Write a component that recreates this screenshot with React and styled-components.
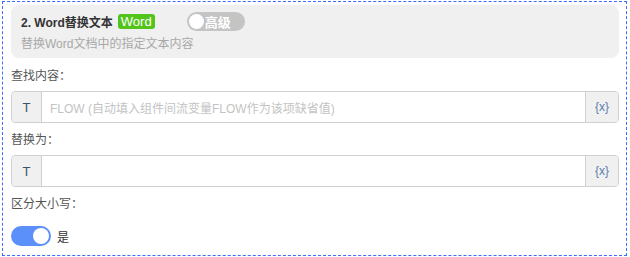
import React from 'react'
import styled, { createGlobalStyle } from 'styled-components'

const Global = createGlobalStyle`
  body {
    margin: 0;
    background: #fff;
    font-family: 'Liberation Sans', 'Noto Sans CJK SC', sans-serif;
    font-size: 12px;
    color: #555;
  }
`

const Panel = styled.div`
  margin: 1px 3px 0 2px;
  border: 1px dashed #3d6bff;
  padding: 3px 7px 10px 8px;
  height: 255px;
  box-sizing: border-box;
`

const Header = styled.div`
  background: #f0f0f0;
  border-radius: 8px;
  padding: 6px 10px 6px;
  margin-bottom: 5px;
`

const TitleRow = styled.div`
  display: flex;
  align-items: center;
  height: 20px;
`

const Title = styled.span`
  font-weight: bold;
  font-size: 12px;
  color: #333;
`

const Badge = styled.span`
  margin-left: 5px;
  background: #52c41a;
  color: #fff;
  border-radius: 3px;
  padding: 0 3px;
  height: 15px;
  line-height: 15px;
  font-size: 13px;
`

const AdvToggle = styled.span`
  margin-left: 32px;
  display: inline-flex;
  align-items: center;
  width: 58px;
  height: 19px;
  border-radius: 10px;
  background: #c4c4c4;
  box-sizing: border-box;
  padding-left: 2px;
  color: #fff;
  font-weight: bold;
  font-size: 13px;
`

const Knob = styled.span`
  width: ${({ size }) => size}px;
  height: ${({ size }) => size}px;
  border-radius: 50%;
  background: #fff;
  flex: none;
`

const Desc = styled.div`
  margin-top: 5px;
  color: #a8a8a8;
  font-size: 12px;
  line-height: 16px;
`

const Label = styled.div`
  line-height: 20px;
  margin: ${({ top }) => top}px 0 5px;
  color: #555;
`

const InputBox = styled.div`
  display: flex;
  height: 32px;
  border: 1px solid #d0d0d0;
  border-radius: 4px;
  box-sizing: border-box;
  overflow: hidden;
`

const Addon = styled.div`
  flex: none;
  width: ${({ w }) => w}px;
  background: #f0f0f0;
  display: flex;
  align-items: center;
  justify-content: center;
  color: ${({ c }) => c};
  font-size: ${({ fs }) => fs}px;
  border-${({ side }) => side}: 1px solid #d0d0d0;
`

const Field = styled.div`
  flex: 1;
  display: flex;
  align-items: center;
  padding-left: 8px;
  color: #c3c3c3;
`

const SwitchRow = styled.div`
  display: flex;
  align-items: center;
  margin-top: 12px;
  color: #333;
`

const Switch = styled.span`
  display: inline-flex;
  align-items: center;
  justify-content: flex-end;
  width: 40px;
  height: 20px;
  border-radius: 10px;
  background: #5b8ff9;
  padding-right: 2px;
  box-sizing: border-box;
  margin-right: 6px;
`

const VarInput = ({ placeholder }) => (
  <InputBox>
    <Addon w={29} side="right" c="#3f5166" fs={13}>T</Addon>
    <Field>{placeholder}</Field>
    <Addon w={32} side="left" c="#5a7fa8" fs={12}>{'{x}'}</Addon>
  </InputBox>
)

export default function App() {
  return (
    <>
      <Global />
      <Panel>
        <Header>
          <TitleRow>
            <Title>2. Word替换文本</Title>
            <Badge>Word</Badge>
            <AdvToggle>
              <Knob size={15} />
              <span style={{ marginLeft: 1 }}>高级</span>
            </AdvToggle>
          </TitleRow>
          <Desc>替换Word文档中的指定文本内容</Desc>
        </Header>
        <Label top={8}>查找内容：</Label>
        <VarInput placeholder="FLOW (自动填入组件间流变量FLOW作为该项缺省值)" />
        <Label top={7}>替换为：</Label>
        <VarInput placeholder="" />
        <Label top={7}>区分大小写：</Label>
        <SwitchRow>
          <Switch>
            <Knob size={16} />
          </Switch>
          是
        </SwitchRow>
      </Panel>
    </>
  )
}
